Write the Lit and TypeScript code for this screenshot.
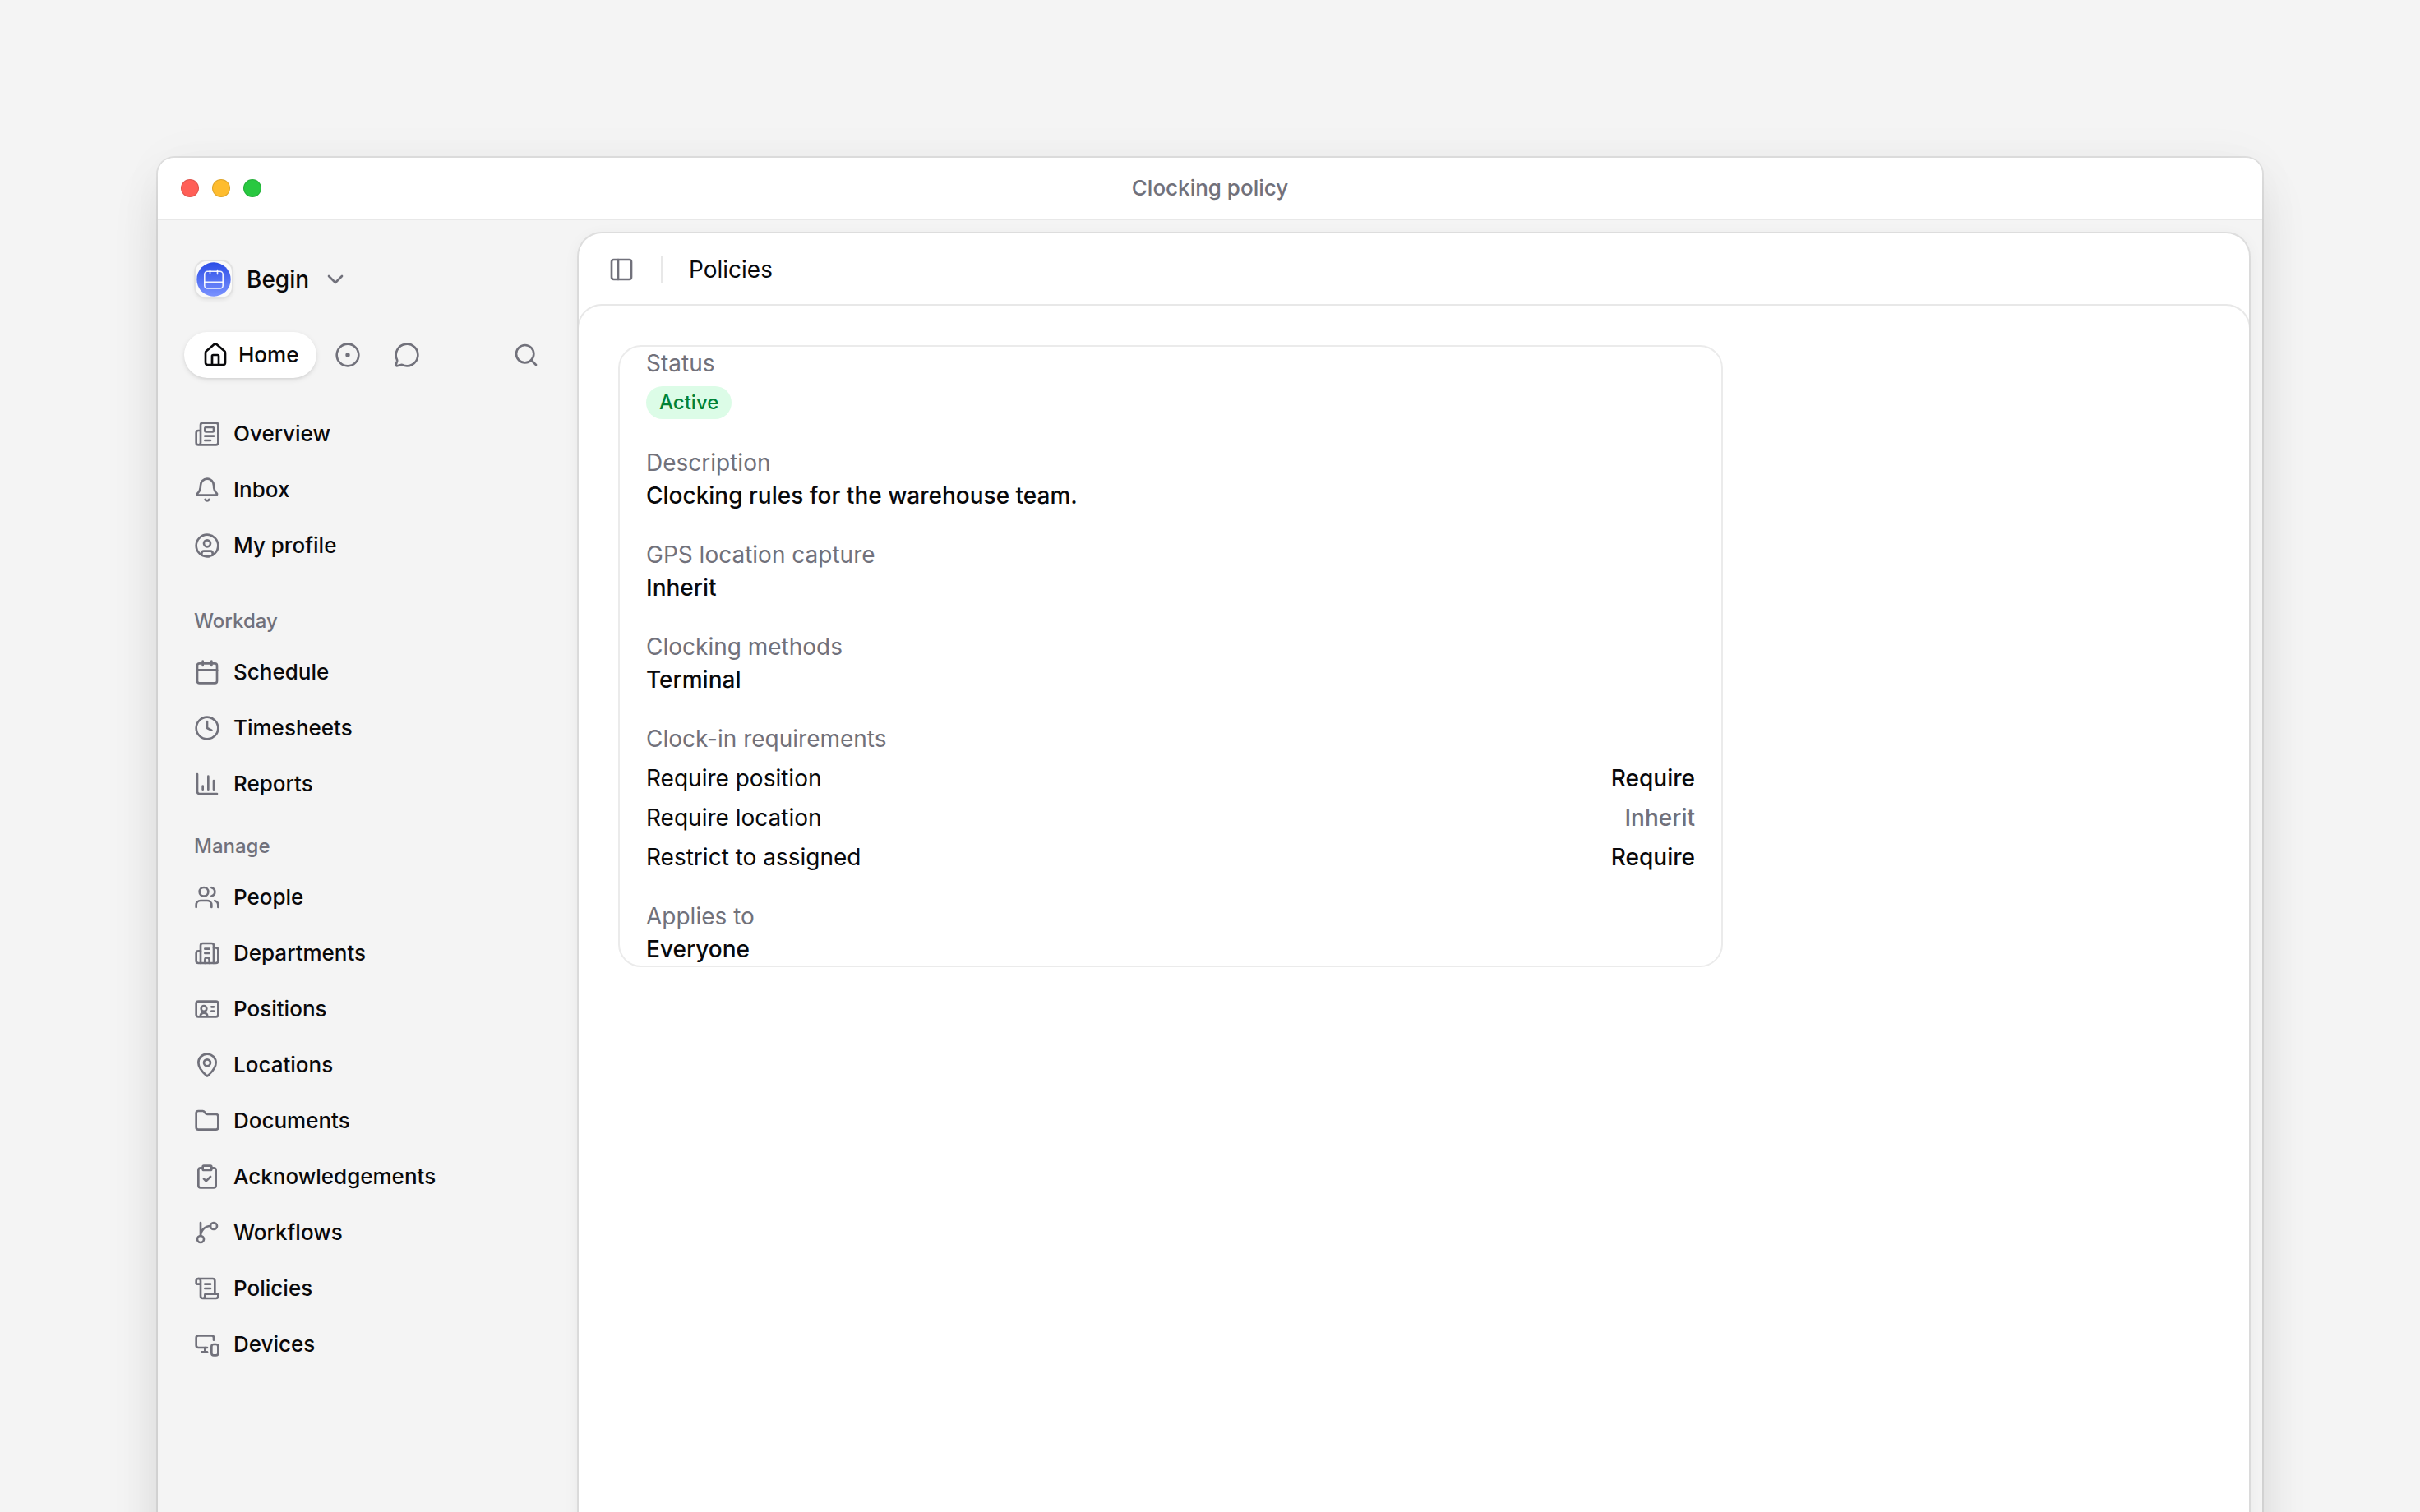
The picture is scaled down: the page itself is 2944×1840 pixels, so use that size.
import { LitElement, html, css, svg, type SVGTemplateResult } from "lit";
import { customElement, property } from "lit/decorators.js";

const ICONS: Record<string, SVGTemplateResult> = {
  home: svg`<path d="M15 21v-8a1 1 0 0 0-1-1h-4a1 1 0 0 0-1 1v8"/><path d="M3 10a2 2 0 0 1 .709-1.528l7-6a2 2 0 0 1 2.582 0l7 6A2 2 0 0 1 21 10v9a2 2 0 0 1-2 2H5a2 2 0 0 1-2-2z"/>`,
  target: svg`<circle cx="12" cy="12" r="10"/><circle cx="12" cy="12" r="1" fill="currentColor"/>`,
  message: svg`<path d="M2.992 16.342a2 2 0 0 1 .094 1.167l-1.065 3.29a1 1 0 0 0 1.236 1.168l3.413-.998a2 2 0 0 1 1.099.092 10 10 0 1 0-4.777-4.719"/>`,
  search: svg`<circle cx="11" cy="11" r="8"/><path d="m21 21-4.34-4.34"/>`,
  chevron: svg`<path d="m6 9 6 6 6-6"/>`,
  panel: svg`<rect x="3" y="3" width="18" height="18" rx="2"/><path d="M9 3v18"/>`,
  news: svg`<path d="M15 18h-5"/><path d="M18 14h-8"/><path d="M4 22h16a2 2 0 0 0 2-2V4a2 2 0 0 0-2-2H8a2 2 0 0 0-2 2v16a2 2 0 0 1-4 0v-9a2 2 0 0 1 2-2h2"/><rect x="10" y="6" width="8" height="4" rx="1"/>`,
  bell: svg`<path d="M10.268 21a2 2 0 0 0 3.464 0"/><path d="M3.262 15.326A1 1 0 0 0 4 17h16a1 1 0 0 0 .74-1.673C19.41 13.956 18 12.499 18 8A6 6 0 0 0 6 8c0 4.499-1.411 5.956-2.738 7.326"/>`,
  user: svg`<circle cx="12" cy="12" r="10"/><circle cx="12" cy="10" r="3"/><path d="M7 20.662V19a2 2 0 0 1 2-2h6a2 2 0 0 1 2 2v1.662"/>`,
  calendar: svg`<path d="M8 2v4"/><path d="M16 2v4"/><rect x="3" y="4" width="18" height="18" rx="2"/><path d="M3 10h18"/>`,
  clock: svg`<circle cx="12" cy="12" r="10"/><path d="M12 6v6l4 2"/>`,
  chart: svg`<path d="M3 3v16a2 2 0 0 0 2 2h16"/><path d="M13 17V5"/><path d="M18 17V9"/><path d="M8 17v-3"/>`,
  people: svg`<path d="M16 21v-2a4 4 0 0 0-4-4H6a4 4 0 0 0-4 4v2"/><path d="M16 3.128a4 4 0 0 1 0 7.744"/><path d="M22 21v-2a4 4 0 0 0-3-3.87"/><circle cx="9" cy="7" r="4"/>`,
  building: svg`<path d="M10 12h4"/><path d="M10 8h4"/><path d="M14 21v-3a2 2 0 0 0-4 0v3"/><path d="M6 10H4a2 2 0 0 0-2 2v7a2 2 0 0 0 2 2h16a2 2 0 0 0 2-2V9a2 2 0 0 0-2-2h-2"/><path d="M6 21V5a2 2 0 0 1 2-2h8a2 2 0 0 1 2 2v16"/>`,
  card: svg`<rect x="2" y="5" width="20" height="14" rx="2"/><path d="M16 10h2"/><path d="M16 14h2"/><circle cx="9" cy="11.6" r="2.5"/><path d="M5.9 17.6a3.3 3.3 0 0 1 6.2 0"/>`,
  pin: svg`<path d="M20 10c0 4.993-5.539 10.193-7.399 11.799a1 1 0 0 1-1.202 0C9.539 20.193 4 14.993 4 10a8 8 0 0 1 16 0"/><circle cx="12" cy="10" r="3"/>`,
  folder: svg`<path d="M20 20a2 2 0 0 0 2-2V8a2 2 0 0 0-2-2h-7.900a2 2 0 0 1-1.690-.9L9.600 3.900A2 2 0 0 0 7.930 3H4a2 2 0 0 0-2 2v13a2 2 0 0 0 2 2Z"/>`,
  clipboard: svg`<rect x="8" y="2" width="8" height="4" rx="1"/><path d="M16 4h2a2 2 0 0 1 2 2v14a2 2 0 0 1-2 2H6a2 2 0 0 1-2-2V6a2 2 0 0 1 2-2h2"/><path d="m9 14 2 2 4-4"/>`,
  branch: svg`<path d="M15 6a9 9 0 0 0-9 9V3"/><circle cx="18" cy="6" r="3"/><circle cx="6" cy="18" r="3"/>`,
  scroll: svg`<path d="M15 12h-5"/><path d="M15 8h-5"/><path d="M19 17V5a2 2 0 0 0-2-2H4"/><path d="M8 21h12a2 2 0 0 0 2-2v-1a1 1 0 0 0-1-1H11a1 1 0 0 0-1 1v1a2 2 0 1 1-4 0V5a2 2 0 1 0-4 0v2a1 1 0 0 0 1 1h3"/>`,
  devices: svg`<path d="M18 8V6a2 2 0 0 0-2-2H4a2 2 0 0 0-2 2v7a2 2 0 0 0 2 2h8"/><path d="M10 19v-3.960 3.150"/><path d="M7 19h5"/><rect x="16" y="12" width="6" height="10" rx="2"/>`,
};

@customElement("ui-icon")
class UiIcon extends LitElement {
  @property() name = "";

  static styles = css`
    :host { display: block; flex: none; width: 32px; height: 32px; }
    svg { display: block; width: 100%; height: 100%; }
  `;

  render() {
    return html`<svg viewBox="0 0 24 24" fill="none" stroke="currentColor" stroke-width="2"
      stroke-linecap="round" stroke-linejoin="round" aria-hidden="true">${ICONS[this.name]}</svg>`;
  }
}

interface NavGroup { title?: string; items: [icon: string, label: string][]; }

const NAV: NavGroup[] = [
  { items: [["news", "Overview"], ["bell", "Inbox"], ["user", "My profile"]] },
  { title: "Workday", items: [["calendar", "Schedule"], ["clock", "Timesheets"], ["chart", "Reports"]] },
  {
    title: "Manage",
    items: [
      ["people", "People"], ["building", "Departments"], ["card", "Positions"], ["pin", "Locations"],
      ["folder", "Documents"], ["clipboard", "Acknowledgements"], ["branch", "Workflows"],
      ["scroll", "Policies"], ["devices", "Devices"],
    ],
  },
];

@customElement("app-sidebar")
class AppSidebar extends LitElement {
  static styles = css`
    :host { display: flex; flex-direction: column; flex: none; box-sizing: border-box; width: 512px; padding: 44px 32px; }
    button { display: flex; align-items: center; border: 0; padding: 0; background: none; color: inherit; font: inherit; }
    .workspace { align-self: flex-start; height: 56px; padding-left: 12px; gap: 16px; font-size: 28px; font-weight: 500; }
    .workspace ui-icon { color: #71717b; }
    .logo { box-sizing: border-box; width: 48px; height: 48px; border: 2px solid #e2e2e2; border-radius: 15px; background: #fafafa; box-shadow: 0 2px 4px rgba(0, 0, 0, 0.06); }
    .logo svg { display: block; width: 44px; height: 44px; }
    .tabs { display: flex; gap: 4px; margin-top: 36px; color: #71717b; }
    .tabs button { justify-content: center; width: 68px; height: 56px; border-radius: 28px; }
    .tabs .current { width: auto; padding: 0 22px; gap: 12px; background: #fff; color: #09090b; font-size: 26px; font-weight: 500; line-height: 30px; box-shadow: 0 2px 6px rgba(0, 0, 0, 0.1), 0 2px 4px -2px rgba(0, 0, 0, 0.1); }
    .tabs .search { width: 64px; margin-left: auto; }
    nav { display: flex; flex-direction: column; margin-top: 36px; }
    ul { display: flex; flex-direction: column; gap: 4px; margin: 0; padding: 0; list-style: none; }
    .first { margin-bottom: 16px; }
    h2 { margin: 14px 0 0; padding: 0 12px; color: #71717b; font-size: 24px; font-weight: 500; line-height: 60px; }
    a { display: flex; align-items: center; gap: 16px; height: 64px; padding: 0 12px; color: inherit; font-size: 26px; font-weight: 500; line-height: 30px; text-decoration: none; }
    a ui-icon { color: #71717b; }
  `;

  render() {
    return html`
      <button class="workspace">
        <span class="logo">
          <svg viewBox="0 0 44 44" fill="none" aria-hidden="true">
            <defs>
              <linearGradient id="blue" x1="0" y1="0" x2="0" y2="1">
                <stop offset="0" stop-color="#2b4de6" />
                <stop offset="1" stop-color="#7a92ff" />
              </linearGradient>
            </defs>
            <circle cx="22" cy="22" r="20.7" fill="url(#blue)" />
            <g stroke="#fff" stroke-opacity=".92" stroke-width="1.6" stroke-linecap="round">
              <rect x="10.8" y="12.2" width="22.4" height="20.8" rx="3.6" />
              <path d="M10.800 25.300h22.400M17.500 10.600v5M26.500 10.600v5" />
            </g>
          </svg>
        </span>
        Begin
        <ui-icon name="chevron"></ui-icon>
      </button>
      <div class="tabs">
        <button class="current"><ui-icon name="home"></ui-icon>Home</button>
        <button aria-label="Activity"><ui-icon name="target"></ui-icon></button>
        <button aria-label="Messages"><ui-icon name="message"></ui-icon></button>
        <button class="search" aria-label="Search"><ui-icon name="search"></ui-icon></button>
      </div>
      <nav>
        ${NAV.map((group) => html`
          ${group.title ? html`<h2>${group.title}</h2>` : ""}
          <ul class=${group.title ? "" : "first"}>
            ${group.items.map(([icon, label]) => html`<li><a href="#"><ui-icon name=${icon}></ui-icon>${label}</a></li>`)}
          </ul>
        `)}
      </nav>
    `;
  }
}

@customElement("policy-card")
class PolicyCard extends LitElement {
  static styles = css`
    :host { display: block; box-sizing: border-box; max-width: 1344px; border: 2px solid #ebebeb; border-radius: 28px; padding: 0 32px; font-size: 28px; line-height: 40px; }
    dl, dd { margin: 0; }
    .details { display: flex; flex-direction: column; gap: 32px; }
    .label { color: #71717b; }
    .value { font-weight: 500; }
    .badge-line { display: flex; align-items: flex-start; height: 41px; margin-top: 8px; }
    .badge { border-radius: 20px; padding: 0 16px; background: #dcfce7; color: #008236; font-size: 24px; font-weight: 500; }
    .rules { display: flex; flex-direction: column; gap: 8px; margin-top: 8px; }
    .rule { display: flex; justify-content: space-between; }
    .muted { color: #71717b; }
  `;

  private field(label: string, value: string) {
    return html`<div><dt class="label">${label}</dt><dd class="value">${value}</dd></div>`;
  }

  private rule(label: string, value: string) {
    return html`<div class="rule"><dt>${label}</dt><dd class="value ${value === "Inherit" ? "muted" : ""}">${value}</dd></div>`;
  }

  render() {
    return html`
      <dl class="details">
        <div><dt class="label">Status</dt><dd class="badge-line"><span class="badge">Active</span></dd></div>
        ${this.field("Description", "Clocking rules for the warehouse team.")}
        ${this.field("GPS location capture", "Inherit")}
        ${this.field("Clocking methods", "Terminal")}
        <div>
          <dt class="label">Clock-in requirements</dt>
          <dd>
            <dl class="rules">
              ${this.rule("Require position", "Require")}
              ${this.rule("Require location", "Inherit")}
              ${this.rule("Restrict to assigned", "Require")}
            </dl>
          </dd>
        </div>
        ${this.field("Applies to", "Everyone")}
      </dl>
    `;
  }
}

@customElement("app-root")
class AppRoot extends LitElement {
  static styles = css`
    :host { display: block; box-sizing: border-box; height: 100vh; overflow: hidden; padding: 192px 192px 0; background: #f4f4f4; color: #09090b; font-family: Inter, "Liberation Sans", sans-serif; }
    .window { display: flex; flex-direction: column; min-height: 100vh; border-radius: 20px; background: #f4f4f4; box-shadow: 0 0 0 2px rgba(0, 0, 0, 0.08), 0 32px 64px -8px rgba(0, 0, 0, 0.14), 0 0 64px rgba(0, 0, 0, 0.03); }
    .titlebar { display: grid; grid-template-columns: 1fr auto 1fr; align-items: center; height: 74px; padding: 0 28px; border-bottom: 2px solid #e8e8e8; border-radius: 20px 20px 0 0; background: #fff; }
    .title { margin: 0; color: #71717b; font-size: 26px; font-weight: 500; line-height: 30px; }
    .lights { display: flex; gap: 16px; }
    .light { box-sizing: border-box; width: 22px; height: 22px; border: 1px solid rgba(0, 0, 0, 0.12); border-radius: 50%; }
    .red { background: #ff5f57; }
    .yellow { background: #febc2e; }
    .green { background: #28c840; }
    .body { display: flex; flex: 1; padding-right: 16px; }
    .panel { display: flex; flex: 1; flex-direction: column; margin-top: 16px; border-radius: 28px 28px 0 0; background: #fff; box-shadow: 0 0 0 2px rgba(0, 0, 0, 0.08), 0 4px 20px rgba(0, 0, 0, 0.06); }
    .toolbar { display: flex; align-items: center; gap: 32px; height: 88px; padding: 0 36px; }
    .toggle { border: 0; padding: 0; background: none; color: #71717b; }
    .divider { width: 2px; height: 32px; background: #e8e8e8; }
    h1 { margin: 0; font-size: 28px; font-weight: 400; }
    .clip { display: flex; flex: 1; margin-top: -2px; padding-top: 2px; overflow: hidden; }
    .content { flex: 1; padding: 48px; border-radius: 28px 28px 0 0; box-shadow: 0 0 0 2px #e8e8e8; }
  `;

  render() {
    return html`
      <div class="window">
        <header class="titlebar">
          <div class="lights">
            <span class="light red"></span><span class="light yellow"></span><span class="light green"></span>
          </div>
          <p class="title">Clocking policy</p>
        </header>
        <div class="body">
          <app-sidebar></app-sidebar>
          <main class="panel">
            <div class="toolbar">
              <button class="toggle" aria-label="Toggle sidebar"><ui-icon name="panel"></ui-icon></button>
              <span class="divider"></span>
              <h1>Policies</h1>
            </div>
            <div class="clip">
              <section class="content"><policy-card></policy-card></section>
            </div>
          </main>
        </div>
      </div>
    `;
  }
}
